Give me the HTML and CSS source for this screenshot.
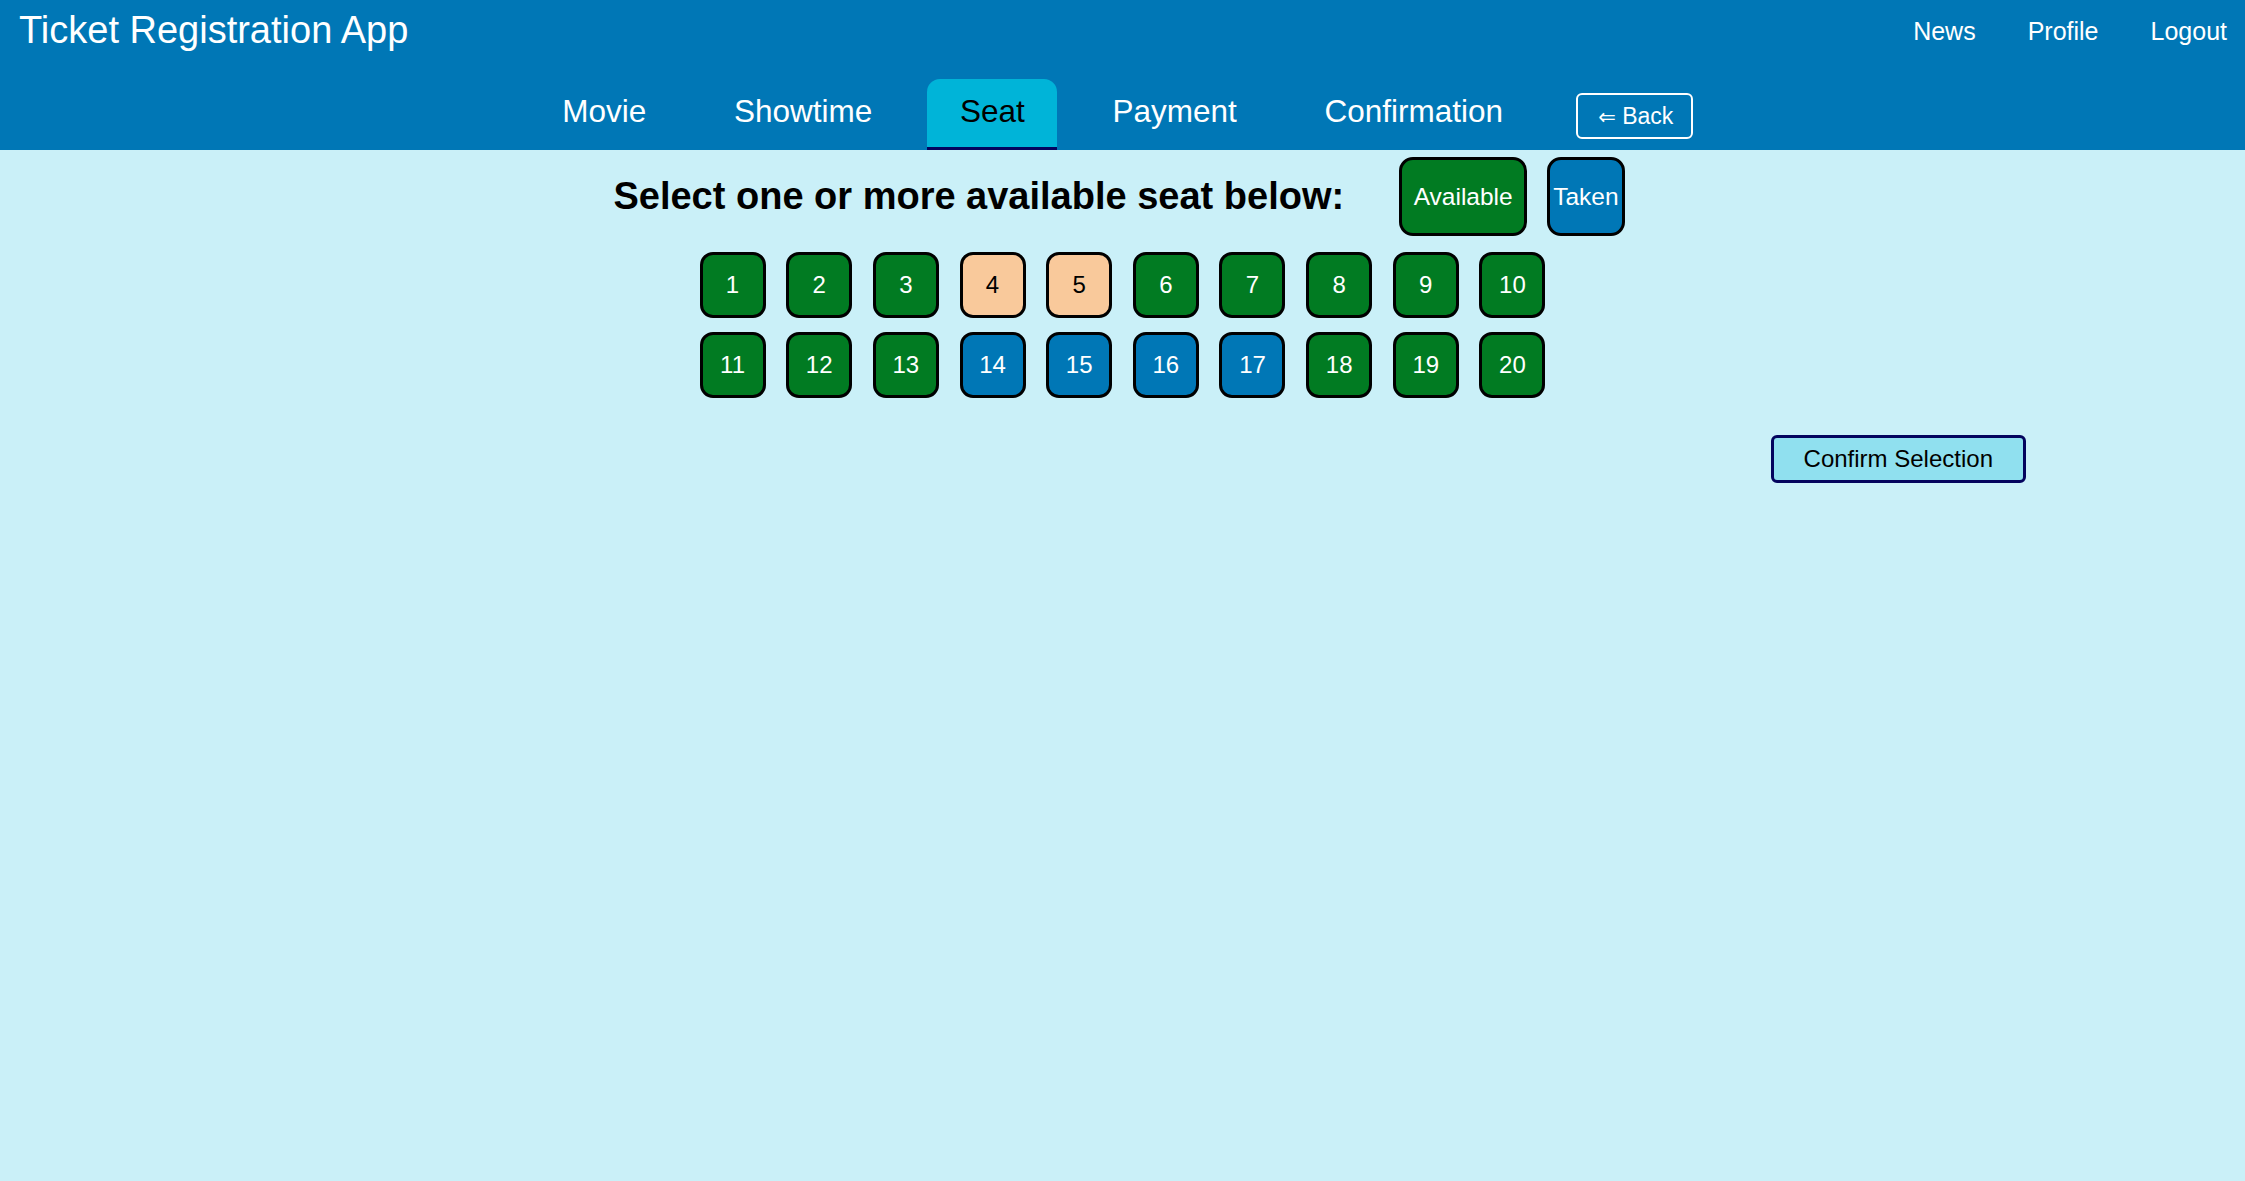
FILE: index.html
```html
<!DOCTYPE html>
<html lang="en">
<head>
<meta charset="utf-8">
<title>Ticket Registration App</title>
<link rel="stylesheet" href="styles.css">
</head>
<body>
<header class="topbar">
  <div class="top-row">
    <h1 class="brand">Ticket Registration App</h1>
    <nav class="user-links">
      <a href="#" class="user-link">News</a>
      <a href="#" class="user-link">Profile</a>
      <a href="#" class="user-link">Logout</a>
    </nav>
  </div>
  <nav class="steps">
    <a href="#" class="step">Movie</a>
    <a href="#" class="step">Showtime</a>
    <a href="#" class="step step-active">Seat</a>
    <a href="#" class="step">Payment</a>
    <a href="#" class="step">Confirmation</a>
    <button class="back-btn" type="button"><span class="back-arrow">&#8656;</span> Back</button>
  </nav>
</header>
<main class="content">
  <div class="legend-row">
    <h2 class="prompt">Select one or more available seat below:</h2>
    <span class="legend legend-available">Available</span>
    <span class="legend legend-taken">Taken</span>
  </div>
  <div class="seat-grid">
    <button class="seat seat-free" type="button">1</button>
    <button class="seat seat-free" type="button">2</button>
    <button class="seat seat-free" type="button">3</button>
    <button class="seat seat-picked" type="button">4</button>
    <button class="seat seat-picked" type="button">5</button>
    <button class="seat seat-free" type="button">6</button>
    <button class="seat seat-free" type="button">7</button>
    <button class="seat seat-free" type="button">8</button>
    <button class="seat seat-free" type="button">9</button>
    <button class="seat seat-free" type="button">10</button>
    <button class="seat seat-free" type="button">11</button>
    <button class="seat seat-free" type="button">12</button>
    <button class="seat seat-free" type="button">13</button>
    <button class="seat seat-taken" type="button">14</button>
    <button class="seat seat-taken" type="button">15</button>
    <button class="seat seat-taken" type="button">16</button>
    <button class="seat seat-taken" type="button">17</button>
    <button class="seat seat-free" type="button">18</button>
    <button class="seat seat-free" type="button">19</button>
    <button class="seat seat-free" type="button">20</button>
  </div>
  <div class="actions">
    <button class="confirm-btn" type="button">Confirm Selection</button>
  </div>
</main>
</body>
</html>
```

FILE: styles.css
```css
html, body {
  margin: 0;
  padding: 0;
  background: #caf0f8;
  font-family: "Liberation Sans", Arial, sans-serif;
}

.topbar {
  background: #0077b6;
  height: 150px;
  display: flex;
  flex-direction: column;
  box-sizing: border-box;
}

.top-row {
  display: flex;
  justify-content: space-between;
  align-items: flex-start;
  padding: 9px 18px 0 19px;
}

.brand {
  margin: 0;
  font-size: 38px;
  font-weight: normal;
  line-height: 1.15;
  color: #ffffff;
}

.user-links {
  display: flex;
  gap: 52px;
  margin-top: 8px;
}

.user-link {
  color: #ffffff;
  text-decoration: none;
  font-size: 25px;
  line-height: 1.15;
}

.steps {
  margin-top: auto;
  display: flex;
  justify-content: center;
  align-items: flex-start;
  gap: 22.7px;
  padding-right: 22px;
}

.step {
  display: block;
  padding: 14px 32.5px 18px;
  font-size: 31.5px;
  line-height: 1.15;
  color: #ffffff;
  text-decoration: none;
  border-bottom: 3px solid transparent;
  border-radius: 13px 13px 0 0;
}

.step-active {
  background: #00b4d8;
  color: #000000;
  border-bottom-color: #03045e;
}

.back-btn {
  margin: 14px 0 0 18px;
  height: 46px;
  padding: 0 18px 0 20px;
  background: transparent;
  border: 2px solid #ffffff;
  border-radius: 6px;
  color: #ffffff;
  font-family: "Liberation Sans", Arial, sans-serif;
  font-size: 23px;
  line-height: 1.15;
}

.back-arrow {
  font-family: "DejaVu Sans", sans-serif;
  font-size: 21px;
}

.content {
  display: flex;
  flex-direction: column;
  align-items: stretch;
}

.legend-row {
  margin-top: 7px;
  display: flex;
  justify-content: center;
  align-items: center;
  padding-right: 7px;
}

.prompt {
  margin: 0 55px 0 0;
  font-size: 38px;
  font-weight: bold;
  line-height: 1.15;
  color: #000000;
}

.legend {
  box-sizing: border-box;
  height: 79px;
  display: flex;
  align-items: center;
  justify-content: center;
  border: 3px solid #000000;
  border-radius: 14px;
  color: #ffffff;
  font-size: 24.5px;
}

.legend-available {
  background: #017b22;
  padding: 0 11.5px;
  margin-right: 20px;
}

.legend-taken {
  background: #0077b6;
  padding: 0 3px;
}

.seat-grid {
  margin: 16px auto 0;
  display: grid;
  grid-template-columns: repeat(10, 66px);
  column-gap: 20.67px;
  row-gap: 14px;
}

.seat {
  box-sizing: border-box;
  width: 66px;
  height: 66px;
  padding: 0;
  border: 3px solid #000000;
  border-radius: 13px;
  font-family: "Liberation Sans", Arial, sans-serif;
  font-size: 24px;
  color: #ffffff;
  display: flex;
  align-items: center;
  justify-content: center;
}

.seat-free {
  background: #017b22;
}

.seat-picked {
  background: #f9c99b;
  color: #000000;
}

.seat-taken {
  background: #0077b6;
}

.actions {
  margin-top: 37px;
  display: flex;
  justify-content: flex-end;
  padding-right: 219px;
}

.confirm-btn {
  box-sizing: border-box;
  height: 48px;
  padding: 0 30px;
  background: #90e0ef;
  border: 3px solid #03045e;
  border-radius: 6px;
  font-family: "Liberation Sans", Arial, sans-serif;
  font-size: 24px;
  color: #000000;
}
```
